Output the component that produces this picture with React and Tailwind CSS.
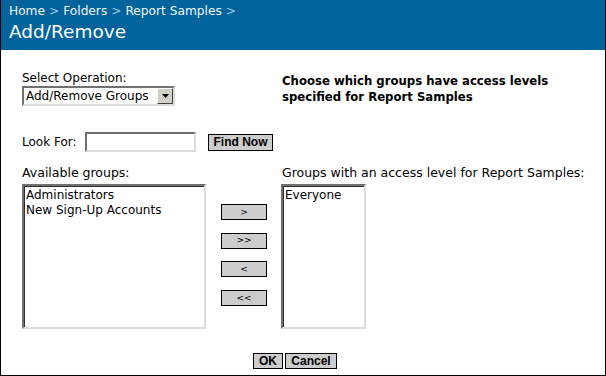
import React from "react";

const font = { fontFamily: '"DejaVu Sans", Verdana, sans-serif' };

const Sep = () => <span className="text-[#9cc8f0] mx-[4px]">&gt;</span>;

const GrayButton = ({ children, className = "" }) => (
  <button
    className={`h-[16px] border border-black bg-[#cccccc] flex items-center justify-center leading-none text-black ${className}`}
  >
    {children}
  </button>
);

const ListBox = ({ items, className = "" }) => (
  <div
    className={`h-[145px] bg-white border-2 border-t-[#707070] border-l-[#707070] border-b-[#dcdcdc] border-r-[#dcdcdc] ${className}`}
  >
    <div className="h-full border-t border-l border-t-[#303030] border-l-[#303030] px-[1px] pt-[1px]">
      {items.map((i) => (
        <div key={i} className="text-[12px] leading-[15px] text-black whitespace-nowrap">
          {i}
        </div>
      ))}
    </div>
  </div>
);

export default function App() {
  return (
    <div style={font} className="w-[606px] h-[376px] bg-white border-l border-r border-b border-black flex flex-col overflow-hidden">
      {/* header */}
      <div className="h-[50px] bg-[#00639c] px-[9px] pt-[3px] text-white shrink-0 -mx-px">
        <div className="text-[12.2px] leading-[17px] text-[#f2f6ff]">
          Home<Sep />Folders<Sep />Report Samples<Sep />
        </div>
        <div className="text-[18.5px] leading-[22px] mt-[1px]">Add/Remove</div>
      </div>

      <div className="pl-[21px] pt-[21px] flex flex-col text-black">
        {/* operation row */}
        <div className="flex">
          <div className="w-[261px] shrink-0">
            <div className="text-[12px] leading-[15px]">Select Operation:</div>
            <div className="w-[153px] h-[20px] border-2 border-t-[#707070] border-l-[#707070] border-b-[#dcdcdc] border-r-[#dcdcdc] bg-white flex items-center">
              <span className="text-[12px] leading-none pl-[2px] flex-1 whitespace-nowrap">Add/Remove Groups</span>
              <div className="w-[16px] h-[16px] bg-[#d4d0c8] border border-t-white border-l-white border-b-[#404040] border-r-[#404040] flex items-center justify-center">
                <svg width="7" height="4" viewBox="0 0 7 4">
                  <path d="M0 0h7L3.5 4z" fill="#000" />
                </svg>
              </div>
            </div>
          </div>
          <div className="text-[11.7px] leading-[16px] font-bold pt-[2px] -ml-px">
            Choose which groups have access levels
            <br />
            specified for Report Samples
          </div>
        </div>

        {/* look for */}
        <div className="flex items-center mt-[26px] h-[20px]">
          <span className="text-[12px] w-[63px]">Look For:</span>
          <div className="w-[111px] h-[20px] border-2 border-t-[#707070] border-l-[#707070] border-b-[#dcdcdc] border-r-[#dcdcdc] bg-white" />
          <button
            style={{ fontFamily: '"Liberation Sans", Arial, sans-serif' }}
            className="ml-[12px] w-[65px] h-[17px] border border-black bg-[#cccccc] text-[12px] font-bold leading-none"
          >
            Find Now
          </button>
        </div>

        {/* labels */}
        <div className="flex mt-[13px] text-[12.5px] leading-[15px]">
          <div className="w-[260px] shrink-0">Available groups:</div>
          <div>Groups with an access level for Report Samples:</div>
        </div>

        {/* lists */}
        <div className="flex mt-[4px]">
          <ListBox items={["Administrators", "New Sign-Up Accounts"]} className="w-[184px]" />
          <div className="ml-[15px] pt-[20px] flex flex-col gap-[12.7px]">
            {[">", ">>", "<", "<<"].map((b) => (
              <GrayButton key={b} className="w-[46px] text-[9px]">
                {b}
              </GrayButton>
            ))}
          </div>
          <ListBox items={["Everyone"]} className="ml-[14px] w-[85px]" />
        </div>

        {/* actions */}
        <div
          style={{ fontFamily: '"Liberation Sans", Arial, sans-serif' }}
          className="flex gap-[2px] mt-[24px] pl-[231px]"
        >
          <button className="w-[30px] h-[16px] border border-black bg-[#cccccc] text-[12px] font-bold leading-none">
            OK
          </button>
          <button className="w-[52px] h-[16px] border border-black bg-[#cccccc] text-[12px] font-bold leading-none">
            Cancel
          </button>
        </div>
      </div>
    </div>
  );
}
